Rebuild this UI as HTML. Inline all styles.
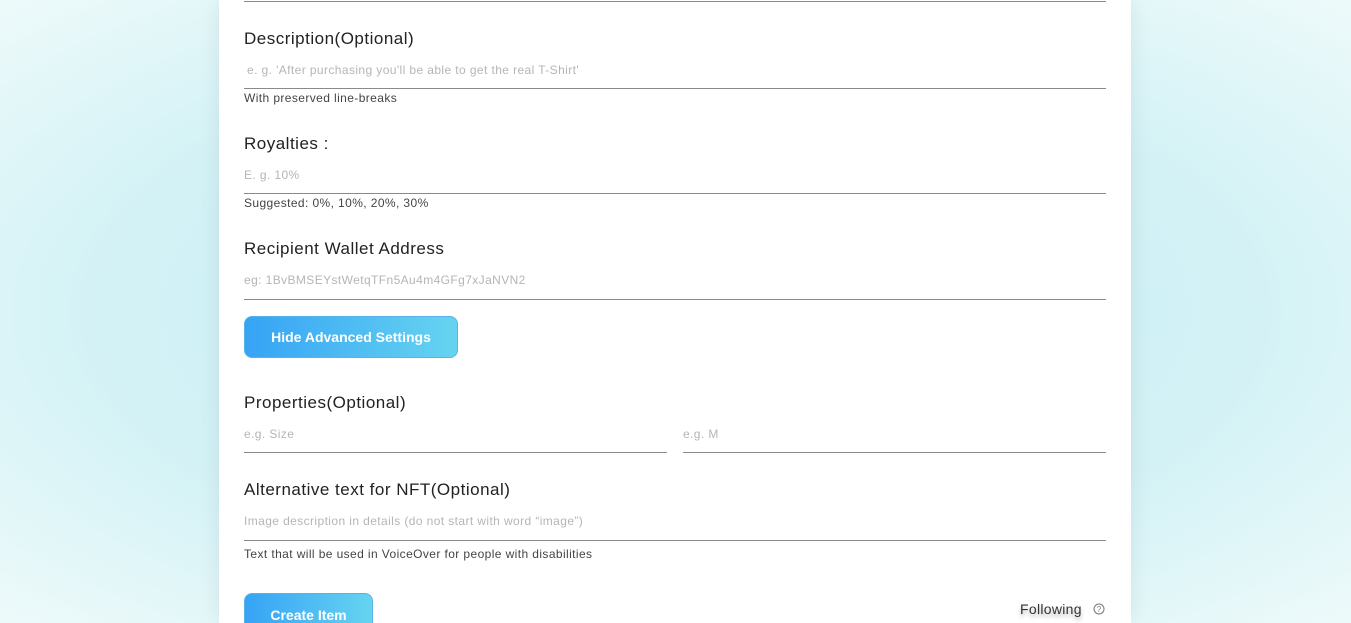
<!DOCTYPE html>
<html style="overflow:hidden;height:623px"><head><style>
body{margin:0;width:1351px;height:623px;overflow:hidden;position:relative;font-family:"Liberation Sans",sans-serif;
background:radial-gradient(ellipse at 50% 50%,#c4ecf3 0%,#d3f2f6 60%,#eefafa 100%);}
.card{position:absolute;left:219px;top:0;width:912px;height:623px;background:#fff;box-shadow:0 0 20px rgba(0,0,0,0.08);}
.a{position:absolute;white-space:nowrap}
.lab{font-size:17px;color:#222;letter-spacing:0.5px}
.ph{font-size:12px;color:#b5b5b5;letter-spacing:0.4px}
.hint{font-size:12px;color:#444;letter-spacing:0.4px}
.line{position:absolute;height:1px;background:#8a8a8a}
.btn{position:absolute;border-radius:8px;background:linear-gradient(90deg,#36a3f5,#66d4f0);border:1px solid #5ab3e8;color:#fff;font-weight:bold;font-size:14px;text-align:center;box-sizing:border-box}
</style></head><body>
<div class="card"></div>
<div class="line" style="left:244px;top:1px;width:862px"></div>
<div class="a lab" style="left:244px;top:29px">Description(Optional)</div>
<div class="a ph" style="left:247px;top:63px">e. g. 'After purchasing you'll be able to get the real T-Shirt'</div>
<div class="line" style="left:244px;top:88px;width:862px"></div>
<div class="a hint" style="left:244px;top:91px">With preserved line-breaks</div>
<div class="a lab" style="left:244px;top:134px">Royalties :</div>
<div class="a ph" style="left:244px;top:168px">E. g. 10%</div>
<div class="line" style="left:244px;top:193px;width:862px"></div>
<div class="a hint" style="left:244px;top:196px">Suggested: 0%, 10%, 20%, 30%</div>
<div class="a lab" style="left:244px;top:239px">Recipient Wallet Address</div>
<div class="a ph" style="left:244px;top:273px">eg: 1BvBMSEYstWetqTFn5Au4m4GFg7xJaNVN2</div>
<div class="line" style="left:244px;top:299px;width:862px"></div>
<div class="btn" style="left:244px;top:316px;width:214px;height:42px;line-height:40px">Hide Advanced Settings</div>
<div class="a lab" style="left:244px;top:393px">Properties(Optional)</div>
<div class="a ph" style="left:244px;top:427px">e.g. Size</div>
<div class="line" style="left:244px;top:452px;width:423px"></div>
<div class="a ph" style="left:683px;top:427px">e.g. M</div>
<div class="line" style="left:683px;top:452px;width:423px"></div>
<div class="a lab" style="left:244px;top:480px">Alternative text for NFT(Optional)</div>
<div class="a ph" style="left:244px;top:514px">Image description in details (do not start with word “image”)</div>
<div class="line" style="left:244px;top:540px;width:862px"></div>
<div class="a hint" style="left:244px;top:547px">Text that will be used in VoiceOver for people with disabilities</div>
<div class="btn" style="left:244px;top:593px;width:129px;height:30px;line-height:42px;border-bottom:none;border-radius:8px 8px 0 0">Create Item</div>
<div class="a" style="left:1020px;top:601px;font-size:14px;color:#333;letter-spacing:0.3px;text-shadow:0 3px 4px rgba(0,0,0,0.3)">Following</div>
<svg class="a" style="left:1093px;top:603px" width="12" height="12" viewBox="0 0 12 12"><circle cx="6" cy="6" r="5" fill="none" stroke="#777" stroke-width="1"/><text x="6" y="9" font-size="8" text-anchor="middle" fill="#777" font-family="Liberation Sans">?</text></svg>
</body></html>
